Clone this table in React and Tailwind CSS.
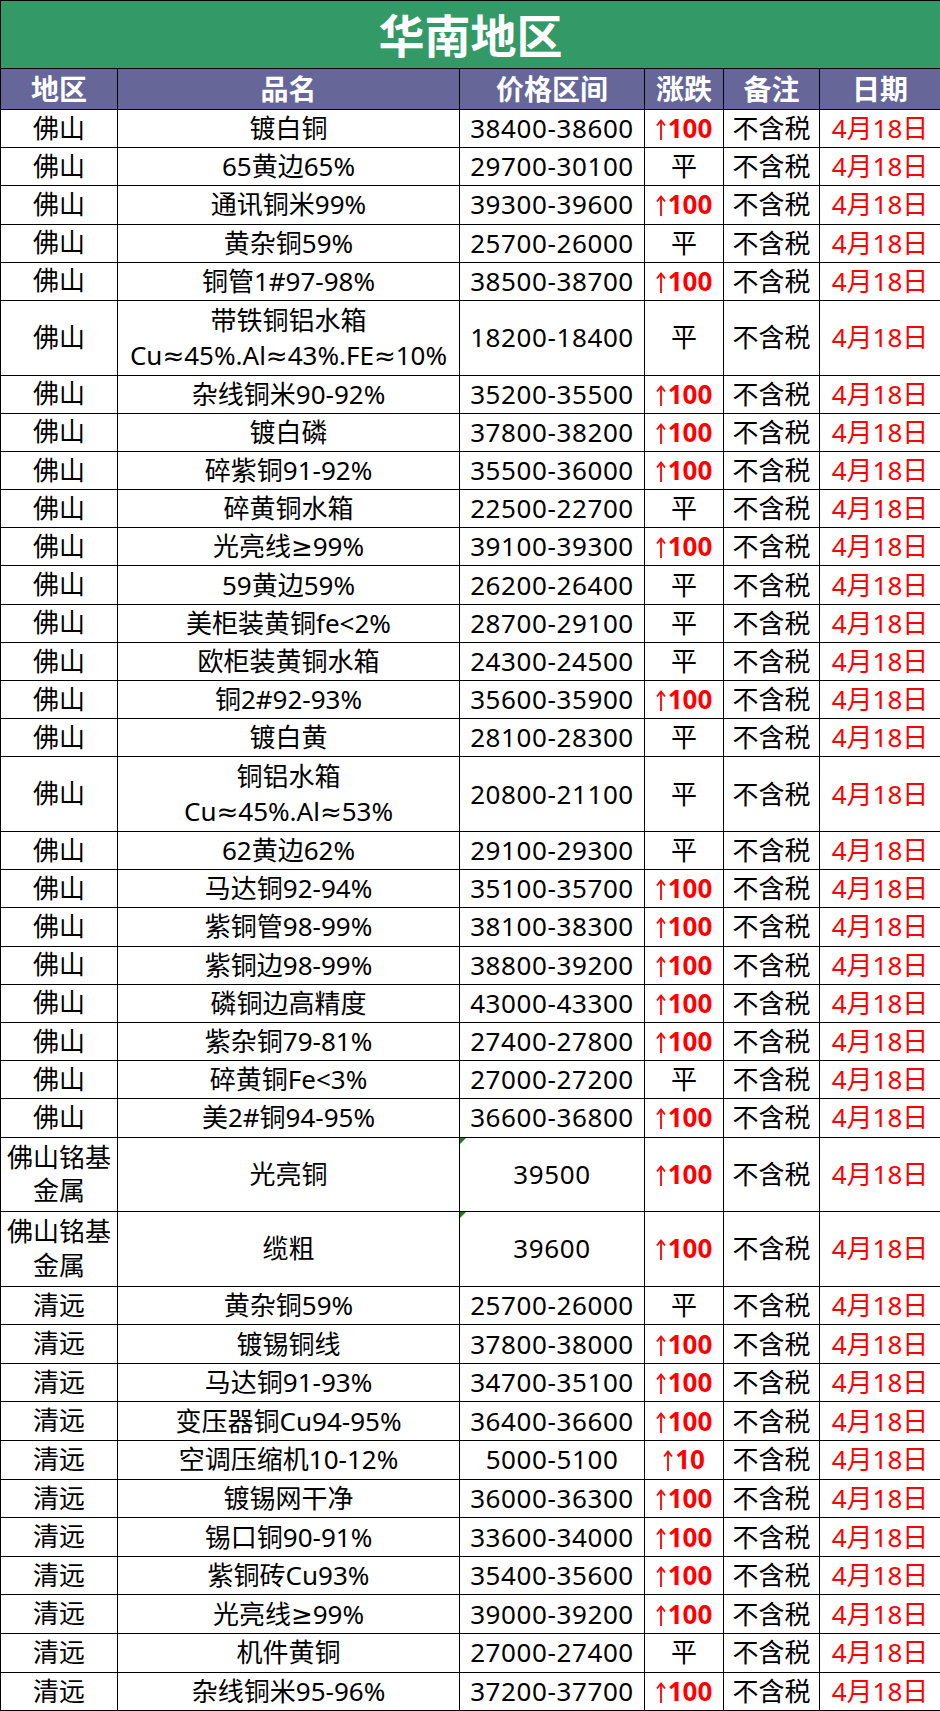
const FONT = { fontFamily: '"Noto Sans", "DejaVu Sans", "Noto Sans CJK SC", sans-serif' }

const FS = '佛山'
const QY = '清远'

// [地区, 品名, 价格, 涨跌(100/10/null), tall]
const ROWS = [
  [FS, '镀白铜', '38400-38600', 100],
  [FS, '65黄边65%', '29700-30100', null],
  [FS, '通讯铜米99%', '39300-39600', 100],
  [FS, '黄杂铜59%', '25700-26000', null],
  [FS, '铜管1#97-98%', '38500-38700', 100],
  [FS, ['带铁铜铝水箱', 'Cu≈45%.Al≈43%.FE≈10%'], '18200-18400', null, true],
  [FS, '杂线铜米90-92%', '35200-35500', 100],
  [FS, '镀白磷', '37800-38200', 100],
  [FS, '碎紫铜91-92%', '35500-36000', 100],
  [FS, '碎黄铜水箱', '22500-22700', null],
  [FS, '光亮线≥99%', '39100-39300', 100],
  [FS, '59黄边59%', '26200-26400', null],
  [FS, '美柜装黄铜fe<2%', '28700-29100', null],
  [FS, '欧柜装黄铜水箱', '24300-24500', null],
  [FS, '铜2#92-93%', '35600-35900', 100],
  [FS, '镀白黄', '28100-28300', null],
  [FS, ['铜铝水箱', 'Cu≈45%.Al≈53%'], '20800-21100', null, true],
  [FS, '62黄边62%', '29100-29300', null],
  [FS, '马达铜92-94%', '35100-35700', 100],
  [FS, '紫铜管98-99%', '38100-38300', 100],
  [FS, '紫铜边98-99%', '38800-39200', 100],
  [FS, '磷铜边高精度', '43000-43300', 100],
  [FS, '紫杂铜79-81%', '27400-27800', 100],
  [FS, '碎黄铜Fe<3%', '27000-27200', null],
  [FS, '美2#铜94-95%', '36600-36800', 100],
  ['佛山铭基金属', '光亮铜', '39500', 100, true, true],
  ['佛山铭基金属', '缆粗', '39600', 100, true, true],
  [QY, '黄杂铜59%', '25700-26000', null],
  [QY, '镀锡铜线', '37800-38000', 100],
  [QY, '马达铜91-93%', '34700-35100', 100],
  [QY, '变压器铜Cu94-95%', '36400-36600', 100],
  [QY, '空调压缩机10-12%', '5000-5100', 10],
  [QY, '镀锡网干净', '36000-36300', 100],
  [QY, '锡口铜90-91%', '33600-34000', 100],
  [QY, '紫铜砖Cu93%', '35400-35600', 100],
  [QY, '光亮线≥99%', '39000-39200', 100],
  [QY, '机件黄铜', '27000-27400', null],
  [QY, '杂线铜米95-96%', '37200-37700', 100],
]

const HEAD = ['地区', '品名', '价格区间', '涨跌', '备注', '日期']

function UpArrow() {
  return (
    <svg className="inline-block w-[10px] h-[21px] mr-[2px] align-[-2px]" viewBox="0 0 10 21" fill="none" stroke="currentColor" strokeWidth={1.8}>
      <path d="M5 1.5V21" />
      <path d="M1 6.5L5 1.5L9 6.5" />
    </svg>
  )
}

function Change({ value }) {
  if (value == null) return <span>平</span>
  return (
    <span className="text-[#ff0000] font-bold">
      <UpArrow />
      {value}
    </span>
  )
}

export default function App() {
  return (
    <div className="w-[940px] bg-white text-black" style={FONT}>
      <table className="w-[940px] table-fixed border-collapse text-[26px] leading-[1.35] text-center">
        <colgroup>
          <col className="w-[117px]" />
          <col className="w-[342px]" />
          <col className="w-[185px]" />
          <col className="w-[79px]" />
          <col className="w-[96px]" />
          <col className="w-[121px]" />
        </colgroup>
        <thead>
          <tr>
            <th colSpan={6} className="h-[68px] bg-[#339966] border border-black text-white text-[46px] font-bold leading-none">
              华南地区
            </th>
          </tr>
          <tr>
            {HEAD.map((h) => (
              <th key={h} className="h-[41px] bg-[#666699] border border-black text-white text-[28px] font-bold leading-none">
                {h}
              </th>
            ))}
          </tr>
        </thead>
        <tbody>
          {ROWS.map(([area, name, price, change, tall, flagged], i) => (
            <tr key={i} className={tall ? 'h-[74.6px]' : i > 26 ? 'h-[38.6px]' : 'h-[38.2px]'}>
              <td className="border border-black px-0.5 leading-[1.3] whitespace-normal">{area}</td>
              <td className="border border-black px-1 whitespace-nowrap">
                {Array.isArray(name) ? (
                  <div className="flex flex-col leading-[1.35]">
                    {name.map((n) => <span key={n}>{n}</span>)}
                  </div>
                ) : name}
              </td>
              <td className="relative border border-black tracking-[0.6px] whitespace-nowrap">
                {flagged && (
                  <span className="absolute left-0 top-0 w-0 h-0 border-t-[6px] border-r-[6px] border-t-[#1e7b1e] border-r-transparent" />
                )}
                {price}
              </td>
              <td className="border border-black whitespace-nowrap">
                <Change value={change} />
              </td>
              <td className="border border-black whitespace-nowrap">不含税</td>
              <td className="border border-black whitespace-nowrap text-[#ff0000]">4月18日</td>
            </tr>
          ))}
        </tbody>
      </table>
    </div>
  )
}
